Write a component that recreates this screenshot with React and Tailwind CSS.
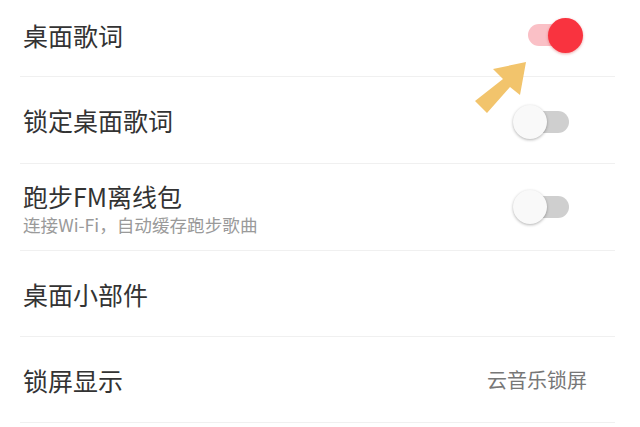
import React from 'react';

const Toggle = ({ on }) => {
  return (
    <div className="relative w-[42px] h-[22px]">
      <div className={on ? 'w-full h-full rounded-full bg-[#fac0c6]' : 'w-full h-full rounded-full bg-[#cfcfcf]'}></div>
      {on ? (
        <div className="absolute top-[-6px] left-[20px] w-[35px] h-[35px] rounded-full bg-[#f9333f] shadow-[0_1px_3px_rgba(200,0,0,0.35)]"></div>
      ) : (
        <div className="absolute top-[-6px] left-[-14px] w-[34px] h-[34px] rounded-full bg-[#f9f9f9] shadow-[0_1px_3px_rgba(0,0,0,0.3)]"></div>
      )}
    </div>
  );
};

const Row = ({ title, sub, right, height }) => {
  return (
    <div className={`${height} ml-[20px] mr-[25px] border-b border-[#f0f0f0] flex items-center justify-between`}>
      <div className="pl-[3px] flex flex-col">
        <span className="text-[25px] leading-[32px] text-[#333333]">{title}</span>
        {sub && <span className="text-[17.6px] leading-[20px] text-[#9a9a9a] mt-[3px]">{sub}</span>}
      </div>
      {right}
    </div>
  );
};

export default function App() {
  return (
    <div
      className="relative w-[640px] h-[427px] bg-white overflow-hidden"
      style={{ fontFamily: '"Noto Sans CJK SC", "Noto Sans", sans-serif' }}
    >
      <Row
        title="桌面歌词"
        height="h-[77px] pb-[6px]"
        right={<div className="pr-[45px] pb-[1px]"><Toggle on /></div>}
      />
      <Row
        title="锁定桌面歌词"
        height="h-[87px]"
        right={<div className="pr-[46px] pt-[4px]"><Toggle /></div>}
      />
      <Row
        title="跑步FM离线包"
        sub="连接Wi-Fi，自动缓存跑步歌曲"
        height="h-[87px]"
        right={<div className="pr-[46px]"><Toggle /></div>}
      />
      <Row title="桌面小部件" height="h-[86px]" />
      <Row
        title="锁屏显示"
        height="h-[86px]"
        right={<span className="pr-[28px] text-[20px] text-[#777777]">云音乐锁屏</span>}
      />

      {/* yellow arrow pointing at the first switch */}
      <svg className="absolute left-0 top-0" width="640" height="427" viewBox="0 0 640 427">
        <polygon
          points="526,62 493,69 503,79 475,101 487,113 510,87 520,95"
          fill="#f2c46c"
        />
      </svg>
    </div>
  );
}
